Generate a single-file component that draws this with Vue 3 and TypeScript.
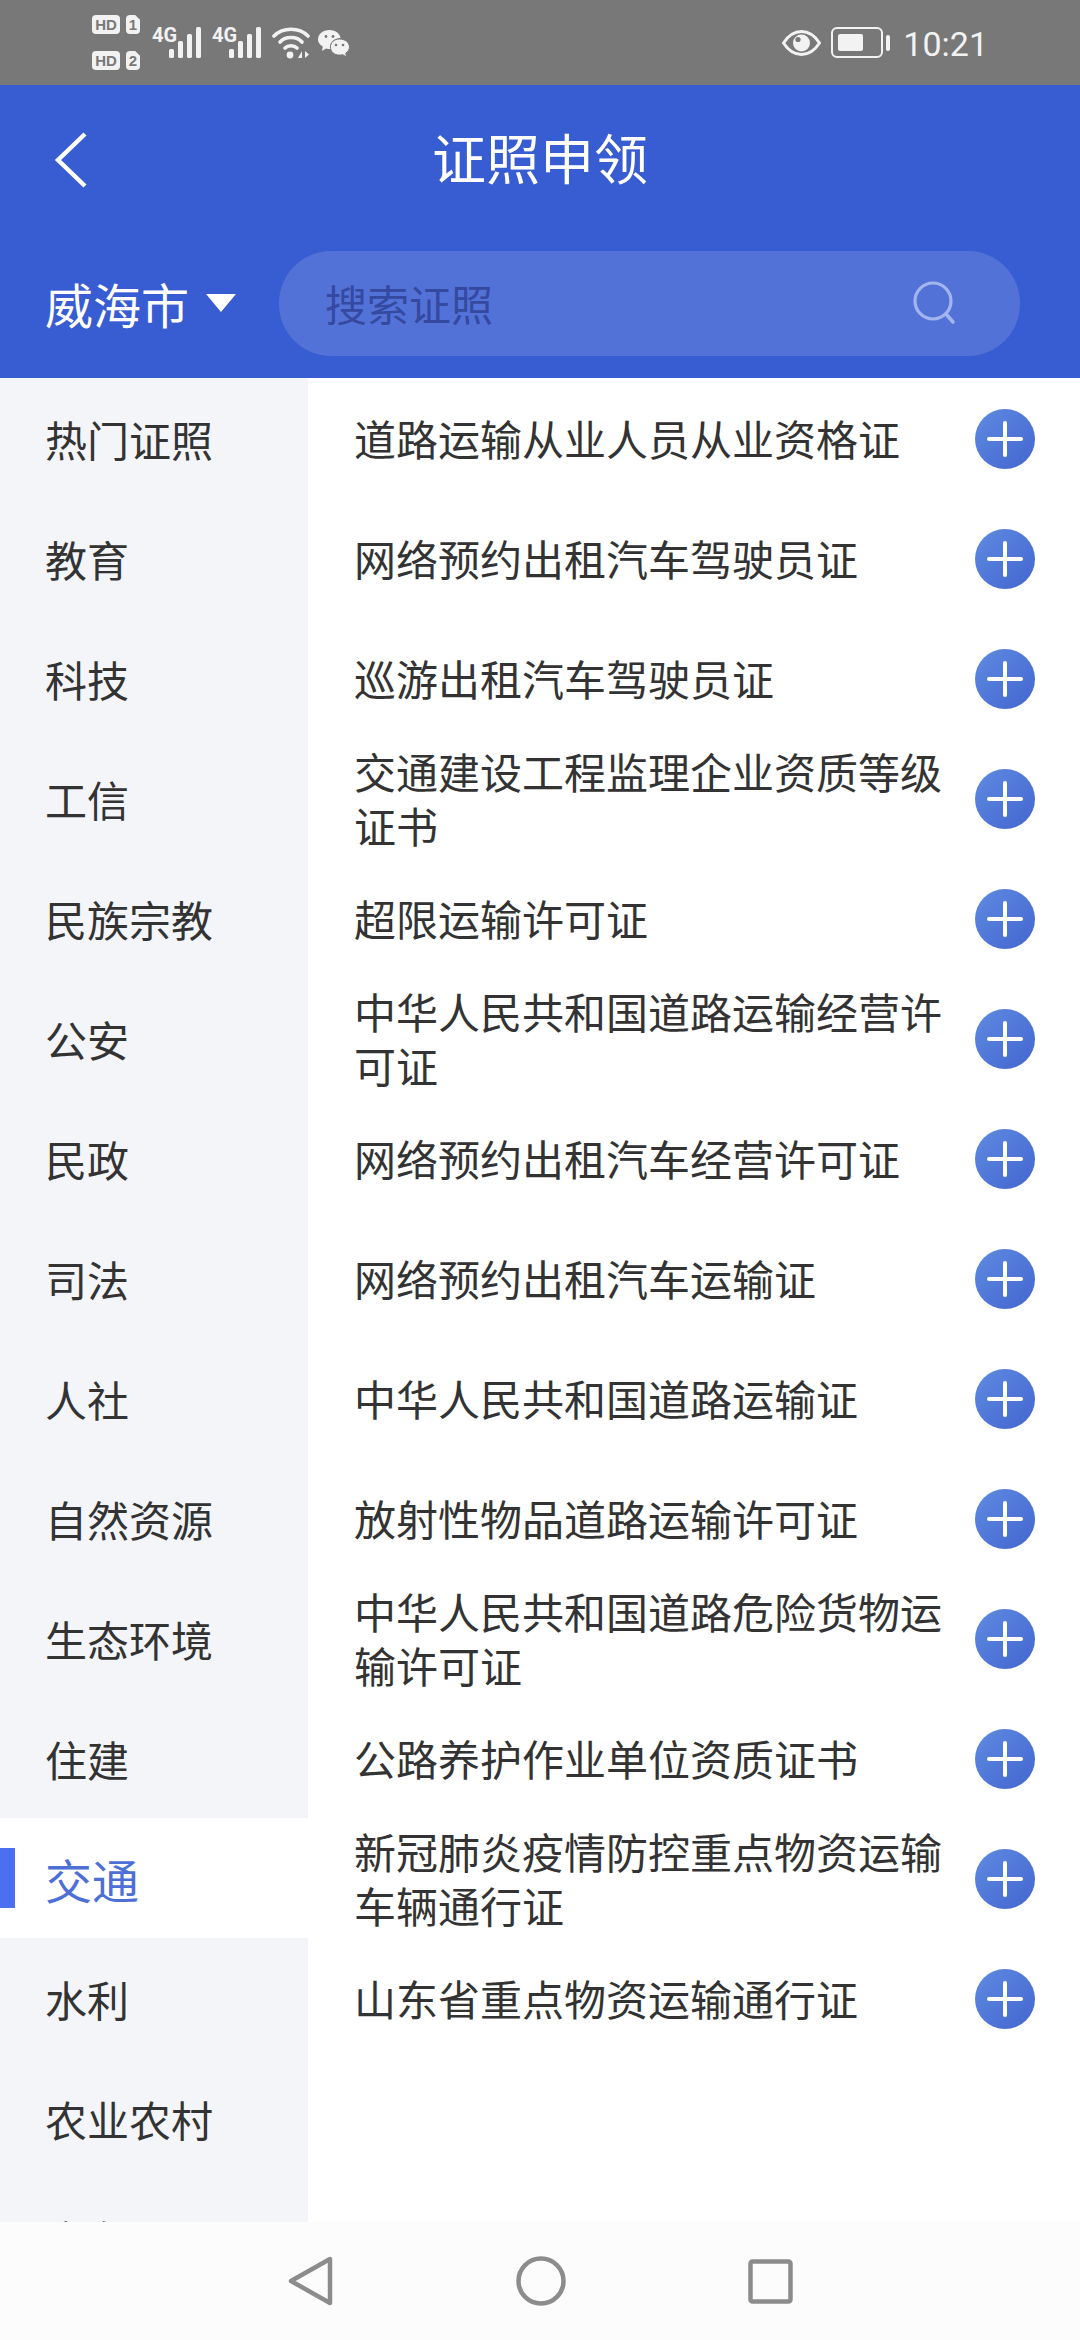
<script setup lang="ts">
const categories: string[] = [
  '热门证照', '教育', '科技', '工信', '民族宗教', '公安', '民政', '司法',
  '人社', '自然资源', '生态环境', '住建', '交通', '水利', '农业农村', '商务',
]
const activeCategory = '交通'

const licences: string[] = [
  '道路运输从业人员从业资格证',
  '网络预约出租汽车驾驶员证',
  '巡游出租汽车驾驶员证',
  '交通建设工程监理企业资质等级证书',
  '超限运输许可证',
  '中华人民共和国道路运输经营许可证',
  '网络预约出租汽车经营许可证',
  '网络预约出租汽车运输证',
  '中华人民共和国道路运输证',
  '放射性物品道路运输许可证',
  '中华人民共和国道路危险货物运输许可证',
  '公路养护作业单位资质证书',
  '新冠肺炎疫情防控重点物资运输车辆通行证',
  '山东省重点物资运输通行证',
]
</script>

<template>
  <div class="page">
    <div class="status-bar">
      <div class="status-left">
        <div class="sims">
          <div class="sim"><span class="hd">HD</span><span class="slot">1</span></div>
          <div class="sim"><span class="hd">HD</span><span class="slot">2</span></div>
        </div>
        <div v-for="n in 2" :key="n" class="signal">
          <span class="net">4G</span>
          <svg width="36" height="32" viewBox="0 0 36 32">
            <rect x="1" y="22" width="5" height="9" rx="1.5" fill="#f2f2f2" />
            <rect x="10" y="14" width="5" height="17" rx="1.5" fill="#f2f2f2" />
            <rect x="19" y="7" width="5" height="24" rx="1.5" fill="#f2f2f2" />
            <rect x="28" y="0" width="5" height="31" rx="1.5" fill="#f2f2f2" />
          </svg>
        </div>
        <svg class="wifi" width="38" height="32" viewBox="0 0 38 32">
          <g fill="none" stroke="#f2f2f2" stroke-width="3.6" stroke-linecap="round">
            <path d="M2 9 C11 0 27 0 36 9" />
            <path d="M8 15 C13 9 25 9 30 15" />
            <path d="M13 21 C16 18 22 18 25 21" />
          </g>
          <circle cx="18" cy="28" r="3.4" fill="#f2f2f2" />
          <path d="M26 31 L30 24 V31 Z M33 24 V31 L37 27.5 Z" fill="#f2f2f2" />
        </svg>
        <svg class="wechat" width="32" height="28" viewBox="0 0 32 28">
          <path d="M11.5 0 C18 0 22 4 22.5 8 C16 8 11 13 12.5 19 C11 19 9.5 19 8 18.5 L4 21 L4.8 16.6 C2 15 0 12.5 0 9.5 C0 4 5 0 11.5 0 Z" fill="#f2f2f2" />
          <path d="M21.5 9 C27 9 31.5 12.6 31.5 17 C31.5 19.6 30 21.6 27.8 23.2 L28.6 27 L24.8 24.7 C23.6 25 22.6 25.1 21.5 25.1 C16 25.1 12.4 21.5 12.4 17 C12.4 12.6 16 9 21.5 9 Z" fill="#f2f2f2" stroke="#787878" stroke-width="1" />
          <circle cx="8" cy="6.5" r="1.4" fill="#787878" />
          <circle cx="15" cy="6.5" r="1.4" fill="#787878" />
          <circle cx="18" cy="15" r="1.3" fill="#787878" />
          <circle cx="25" cy="15" r="1.3" fill="#787878" />
        </svg>
      </div>
      <div class="status-right">
        <svg width="39" height="26" viewBox="0 0 39 26">
          <path d="M1.5 13 C7 4.5 13 1.5 19.5 1.5 C26 1.5 32 4.5 37.5 13 C32 21.5 26 24.5 19.5 24.5 C13 24.5 7 21.5 1.5 13 Z" fill="none" stroke="#f2f2f2" stroke-width="3" />
          <circle cx="19.5" cy="13" r="8.5" fill="#f2f2f2" />
          <circle cx="16" cy="9.5" r="2.6" fill="#787878" />
        </svg>
        <div class="battery">
          <div class="battery-body"><div class="battery-fill" /></div>
          <div class="battery-tip" />
        </div>
        <span class="clock">10:21</span>
      </div>
    </div>

    <header class="header">
      <div class="title-row">
        <svg class="back" width="34" height="56" viewBox="0 0 34 56">
          <path d="M31 2 L4 28 L31 54" fill="none" stroke="#fff" stroke-width="4.4" />
        </svg>
        <h1 class="title">证照申领</h1>
      </div>
      <div class="search-row">
        <div class="city">
          <span>威海市</span>
          <i class="caret" />
        </div>
        <div class="search">
          <span class="placeholder">搜索证照</span>
          <svg width="46" height="44" viewBox="0 0 46 44">
            <circle cx="21" cy="20" r="18" fill="none" stroke="#a2b5ee" stroke-width="3.2" />
            <path d="M34 33 L41 41" fill="none" stroke="#a2b5ee" stroke-width="3.6" stroke-linecap="round" />
          </svg>
        </div>
      </div>
    </header>

    <main class="content">
      <aside class="sidebar">
        <div
          v-for="name in categories"
          :key="name"
          class="category"
          :class="{ active: name === activeCategory }"
        >{{ name }}</div>
      </aside>
      <section class="list">
        <div v-for="name in licences" :key="name" class="licence">
          <span class="licence-name">{{ name }}</span>
          <div class="add" />
        </div>
      </section>
    </main>

    <nav class="nav">
      <svg width="46" height="50" viewBox="0 0 46 50">
        <path d="M42 3 V47 L3 25 Z" fill="none" stroke="#8c8c8c" stroke-width="4.5" stroke-linejoin="round" />
      </svg>
      <svg width="50" height="50" viewBox="0 0 50 50">
        <circle cx="25" cy="25" r="22.5" fill="none" stroke="#8c8c8c" stroke-width="4.5" />
      </svg>
      <svg width="45" height="45" viewBox="0 0 45 45">
        <rect x="2.5" y="2.5" width="40" height="40" rx="2" fill="none" stroke="#8c8c8c" stroke-width="4.5" />
      </svg>
    </nav>
  </div>
</template>

<style>
body {
  margin: 0;
}
</style>

<style scoped>
.page {
  width: 1080px;
  height: 2340px;
  display: flex;
  flex-direction: column;
  overflow: hidden;
  background: #fff;
  font-family: "Noto Sans CJK SC", "Noto Sans", sans-serif;
}

.status-bar {
  height: 85px;
  flex: none;
  display: flex;
  justify-content: space-between;
  align-items: center;
  padding: 0 92px 0 92px;
  background: #787878;
  color: #f2f2f2;
}

.status-left {
  display: flex;
  align-items: center;
}

.status-right {
  display: flex;
  align-items: center;
}

.sims {
  display: flex;
  flex-direction: column;
  gap: 17px;
  margin-right: 12px;
}

.sim {
  display: flex;
  gap: 6px;
}

.hd, .slot {
  height: 19px;
  display: flex;
  align-items: center;
  justify-content: center;
  border-radius: 4px;
  background: #f2f2f2;
  color: #787878;
  font-family: "Liberation Sans", sans-serif;
  font-size: 15px;
  font-weight: 700;
}

.hd {
  width: 28px;
}

.slot {
  width: 14px;
  clip-path: polygon(0 0, 65% 0, 100% 25%, 100% 100%, 0 100%);
}

.signal {
  position: relative;
  width: 52px;
  height: 32px;
  margin-right: 8px;
  display: flex;
  justify-content: flex-end;
}

.net {
  position: absolute;
  left: 0;
  top: -2px;
  font-family: "Liberation Sans Narrow", "Roboto", sans-serif;
  font-size: 20px;
  font-weight: 700;
  line-height: 20px;
}

.wifi {
  margin-left: 0;
}

.wechat {
  margin: 3px 0 0 8px;
}

.battery {
  display: flex;
  align-items: center;
  margin-left: 10px;
}

.battery-body {
  width: 52px;
  height: 31px;
  box-sizing: border-box;
  padding: 5px;
  border: 2px solid #f2f2f2;
  border-radius: 6px;
}

.battery-fill {
  width: 25px;
  height: 100%;
  background: #f2f2f2;
  border-radius: 2px;
}

.battery-tip {
  width: 4px;
  height: 16px;
  margin-left: 3px;
  border-radius: 2px;
  background: #f2f2f2;
}

.clock {
  margin-left: 13px;
  padding-top: 2px;
  font-family: "Roboto", sans-serif;
  font-size: 34px;
  line-height: 40px;
}

.header {
  height: 293px;
  flex: none;
  box-sizing: border-box;
  padding-top: 42px;
  background: #385cd1;
  color: #fff;
}

.title-row {
  position: relative;
  height: 60px;
  display: flex;
  align-items: center;
  justify-content: center;
}

.back {
  position: absolute;
  left: 54px;
  top: 5px;
}

.title {
  margin: 0;
  font-size: 54px;
  font-weight: 400;
  line-height: 60px;
}

.search-row {
  display: flex;
  align-items: center;
  margin-top: 64px;
  padding: 0 60px 0 45px;
}

.city {
  width: 234px;
  flex: none;
  display: flex;
  align-items: center;
  gap: 17px;
  margin-top: -2px;
  font-size: 48px;
  line-height: 60px;
}

.caret {
  width: 0;
  height: 0;
  border-left: 15px solid transparent;
  border-right: 15px solid transparent;
  border-top: 18px solid #fff;
}

.search {
  flex: 1;
  height: 105px;
  display: flex;
  align-items: center;
  justify-content: space-between;
  box-sizing: border-box;
  padding: 0 62px 2px 46px;
  border-radius: 52px;
  background: #5372d8;
}

.placeholder {
  color: #34499f;
  font-size: 42px;
  line-height: 50px;
}

.content {
  flex: 1;
  min-height: 0;
  display: flex;
  overflow: hidden;
}

.sidebar {
  width: 308px;
  flex: none;
  background: #f3f5f9;
}

.category {
  position: relative;
  height: 120px;
  display: flex;
  align-items: center;
  padding-left: 45px;
  color: #333;
  font-size: 42px;
}

.category.active {
  background: #fff;
  color: #4d6fd6;
  font-size: 47px;
}

.category.active::before {
  content: "";
  position: absolute;
  left: 0;
  top: 30px;
  width: 15px;
  height: 60px;
  background: #4a6ff0;
}

.list {
  flex: 1;
}

.licence {
  height: 120px;
  display: flex;
  align-items: center;
  justify-content: space-between;
  padding: 0 45px 0 46px;
}

.licence-name {
  width: 590px;
  color: #333;
  font-size: 42px;
  line-height: 54px;
}

.add {
  position: relative;
  width: 60px;
  height: 60px;
  flex: none;
  margin-top: 2px;
  border-radius: 50%;
  background: linear-gradient(135deg, #5f8ae0, #4266d0);
}

.add::before,
.add::after {
  content: "";
  position: absolute;
  background: #fff;
  border-radius: 2px;
}

.add::before {
  left: 12px;
  right: 12px;
  top: 28px;
  height: 4px;
}

.add::after {
  top: 12px;
  bottom: 12px;
  left: 28px;
  width: 4px;
}

.nav {
  height: 118px;
  flex: none;
  display: flex;
  align-items: center;
  justify-content: center;
  gap: 182px;
  box-sizing: border-box;
  background: #fcfcfc;
}
</style>
